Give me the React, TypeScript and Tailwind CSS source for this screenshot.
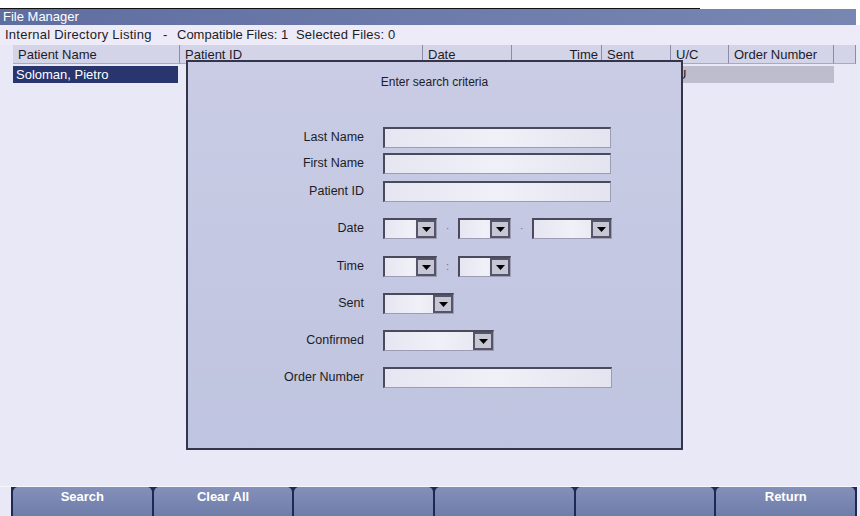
import React from "react"

// Column layout of the directory listing
const columns = [
  { label: "Patient Name", cls: "w-[167px]" },
  { label: "Patient ID", cls: "w-[243px]" },
  { label: "Date", cls: "w-[89px]" },
  { label: "Time", cls: "w-[90px] justify-end pr-[3px]" },
  { label: "Sent", cls: "w-[69px]" },
  { label: "U/C", cls: "w-[58px]" },
  { label: "Order Number", cls: "w-[105px]" },
  { label: "", cls: "w-[22px]" },
]

const softKeys = ["Search", "Clear All", "", "", "", "Return"]

// Sunken text box
const TextBox = ({ w }: { w: string }) => (
  <div
    className={`${w} h-[21px] border-t-2 border-l-2 border-b border-r border-t-[#4a4a5c] border-l-[#4a4a5c] border-b-[#9c9cb4] border-r-[#9c9cb4] bg-gradient-to-r from-[#e6e6f2] via-[#f0f0f8] to-[#e4e4f0]`}
  />
)

// Combo box with the small arrow button on the right
const Combo = ({ w }: { w: string }) => (
  <div
    className={`${w} h-[21px] flex border-t-2 border-l-2 border-b border-r border-t-[#4a4a5c] border-l-[#4a4a5c] border-b-[#9c9cb4] border-r-[#9c9cb4] bg-gradient-to-r from-[#e6e6f2] via-[#f0f0f8] to-[#e4e4f0]`}
  >
    <div className="flex-1" />
    <div className="w-[20px] h-full flex items-center justify-center bg-[#c6c6d4] border-2 border-[#55556a]">
      <svg width="9" height="5" viewBox="0 0 9 5">
        <polygon points="0,0 9,0 4.5,5" fill="#000" />
      </svg>
    </div>
  </div>
)

const Row = ({ label, mt, children }: { label: string; mt: string; children: React.ReactNode }) => (
  <div className={`flex items-center h-[21px] ${mt}`}>
    <div className="w-[178px] pr-[2px] text-right text-[12.5px] text-[#1c1c28]">{label}</div>
    <div className="ml-[17px] flex items-center">{children}</div>
  </div>
)

const Sep = ({ ch }: { ch: string }) => (
  <span className="w-[21px] text-center text-[11px] text-[#70708a]">{ch}</span>
)

export default function App() {
  return (
    <div className="w-[860px] h-[516px] flex flex-col bg-[#e9e8f6] font-['Liberation_Sans',Arial,sans-serif] text-[13px] text-[#1c1c28] overflow-hidden">
      {/* top strip */}
      <div className="h-[8px] bg-white" />
      <div className="h-px flex bg-white">
        <div className="w-[700px] bg-[#111]" />
      </div>

      {/* title bar */}
      <div className="h-[16px] flex bg-white">
        <div className="w-[856px] bg-gradient-to-r from-[#5f6e9f] via-[#6d7bab] to-[#7886b2] text-white text-[13px] leading-[16px] pl-[3px]">
          File Manager
        </div>
      </div>

      {/* info line */}
      <div className="h-[20px] flex items-center pl-[5px] bg-[#ecebf7] whitespace-nowrap">
        <span className="w-[152px] shrink-0 tracking-[0.25px]">Internal Directory Listing</span>
        <span className="w-[20px] shrink-0 pl-[6px]">-</span>
        <span className="w-[119px] shrink-0">Compatible Files: 1</span>
        <span className="tracking-[0.2px]">Selected Files: 0</span>
      </div>

      <div className="relative flex-1 flex flex-col">
        {/* header row */}
        <div className="flex ml-[13px] h-[19px]">
          {columns.map((c, i) => (
            <div
              key={i}
              className={`${c.cls} flex items-center pl-[5px] bg-[#d4d4e8] border-r border-[#8c8caa] border-b border-b-[#a8a8c4] leading-none`}
            >
              {c.label}
            </div>
          ))}
        </div>

        {/* first record */}
        <div className="flex ml-[13px] h-[17px] mt-[2px]">
          <div className="w-[165px] bg-[#28356f] text-white pl-[3px] leading-[17px]">Soloman, Pietro</div>
          <div className="w-[493px]" />
          <div className="w-[58px] pl-[6px] leading-[17px] bg-[#bdbdcd]">U</div>
          <div className="w-[105px] bg-[#bdbdcd]" />
        </div>

        {/* search dialog */}
        <div className="absolute left-[186px] top-[15px] w-[497px] h-[390px] border-2 border-[#34344a] bg-gradient-to-b from-[#c9cce4] via-[#c4c8e2] to-[#bfc4e0] flex flex-col">
          <div className="pt-[12px] h-[28px] text-center leading-[16px] text-[12px]">Enter search criteria</div>

          <Row label="Last Name" mt="mt-[37px]">
            <TextBox w="w-[228px]" />
          </Row>
          <Row label="First Name" mt="mt-[5px]">
            <TextBox w="w-[228px]" />
          </Row>
          <Row label="Patient ID" mt="mt-[7px]">
            <TextBox w="w-[228px]" />
          </Row>
          <Row label="Date" mt="mt-[16px]">
            <Combo w="w-[54px]" />
            <Sep ch="·" />
            <Combo w="w-[53px]" />
            <Sep ch="·" />
            <Combo w="w-[80px]" />
          </Row>
          <Row label="Time" mt="mt-[17px]">
            <Combo w="w-[54px]" />
            <Sep ch=":" />
            <Combo w="w-[53px]" />
          </Row>
          <Row label="Sent" mt="mt-[16px]">
            <Combo w="w-[71px]" />
          </Row>
          <Row label="Confirmed" mt="mt-[16px]">
            <Combo w="w-[111px]" />
          </Row>
          <Row label="Order Number" mt="mt-[16px]">
            <TextBox w="w-[229px]" />
          </Row>
        </div>
      </div>

      {/* soft key bar */}
      <div className="h-[30px] flex flex-col">
        <div className="h-px bg-[#f6f6fc]" />
        <div className="flex-1 flex">
          <div className="ml-[11px] w-[846px] flex gap-[2px] px-[2px] bg-[#1d2853]">
            {softKeys.map((k, i) => (
              <div
                key={i}
                className="flex-1 rounded-t-[5px] bg-gradient-to-b from-[#8290ba] to-[#6f7da9] text-white font-bold text-[13px] text-center leading-[20px]"
              >
                {k}
              </div>
            ))}
          </div>
        </div>
      </div>
    </div>
  )
}
